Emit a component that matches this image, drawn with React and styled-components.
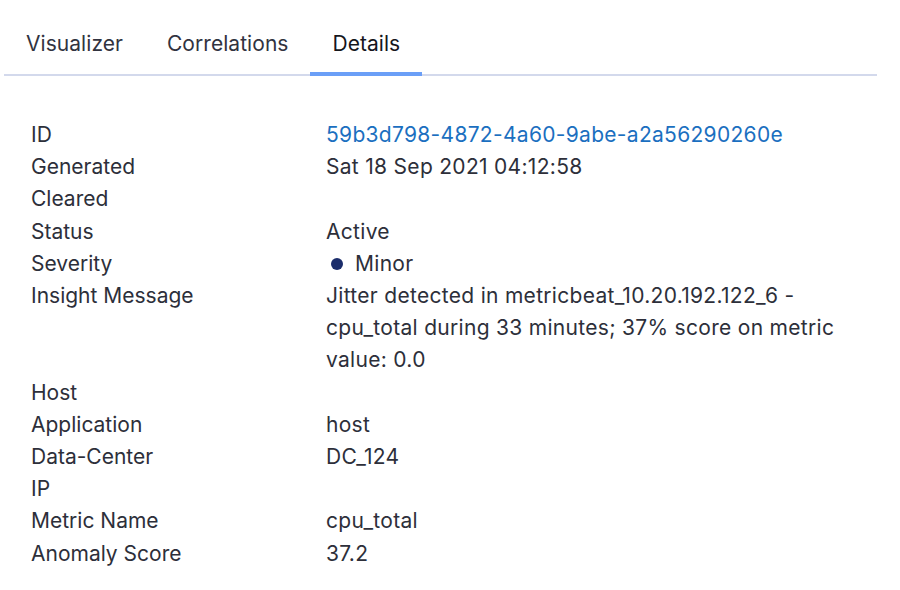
import React from 'react'
import styled, { createGlobalStyle } from 'styled-components'

const GlobalStyle = createGlobalStyle`
  body {
    margin: 0;
    background: #ffffff;
    font-family: Inter, "Noto Sans", sans-serif;
    color: #2c2e38;
  }
`

const Page = styled.div`
  padding-left: 4px;
  width: 873px;
`

const TabBar = styled.div`
  display: flex;
  border-bottom: 2px solid #d3d9ec;
`

const Tab = styled.div`
  padding: 30px 22px 14px;
  font-size: 21px;
  letter-spacing: 0.05px;
  line-height: 28px;
  color: ${(p) => (p.active ? '#15161c' : '#31333f')};
  margin-bottom: -2px;
  border-bottom: 4px solid ${(p) => (p.active ? '#6b9ff7' : 'transparent')};
  cursor: pointer;
`

const DetailsList = styled.dl`
  display: grid;
  grid-template-columns: 295px 540px;
  margin: 43px 0 0;
  padding-left: 27px;
  font-size: 21px;
  line-height: 32.2px;
`

const Label = styled.dt`
  margin: 0;
  color: #2d2f3a;
`

const Value = styled.dd`
  margin: 0;
  letter-spacing: 0.3px;
  color: ${(p) => (p.link ? '#1b6fc0' : '#2d2f3a')};
`

const Dot = styled.span`
  display: inline-block;
  vertical-align: 1px;
  width: 12px;
  height: 12px;
  border-radius: 50%;
  background: ${(p) => p.color};
  margin: 0 12px 0 5px;
`

const rows = [
  { label: 'ID', value: '59b3d798-4872-4a60-9abe-a2a56290260e', link: true },
  { label: 'Generated', value: 'Sat 18 Sep 2021 04:12:58' },
  { label: 'Cleared', value: '' },
  { label: 'Status', value: 'Active' },
  { label: 'Severity', value: 'Minor', dot: '#1b2d6b' },
  {
    label: 'Insight Message',
    value:
      'Jitter detected in metricbeat_10.20.192.122_6 - cpu_total during 33 minutes; 37% score on metric value: 0.0',
  },
  { label: 'Host', value: '' },
  { label: 'Application', value: 'host' },
  { label: 'Data-Center', value: 'DC_124' },
  { label: 'IP', value: '' },
  { label: 'Metric Name', value: 'cpu_total' },
  { label: 'Anomaly Score', value: '37.2' },
]

const tabs = ['Visualizer', 'Correlations', 'Details']

export default function App() {
  return (
    <Page>
      <GlobalStyle />
      <TabBar>
        {tabs.map((t) => (
          <Tab key={t} active={t === 'Details'}>
            {t}
          </Tab>
        ))}
      </TabBar>
      <DetailsList>
        {rows.map((r) => (
          <React.Fragment key={r.label}>
            <Label>{r.label}</Label>
            <Value link={r.link}>
              {r.dot && <Dot color={r.dot} />}
              {r.value}
            </Value>
          </React.Fragment>
        ))}
      </DetailsList>
    </Page>
  )
}
